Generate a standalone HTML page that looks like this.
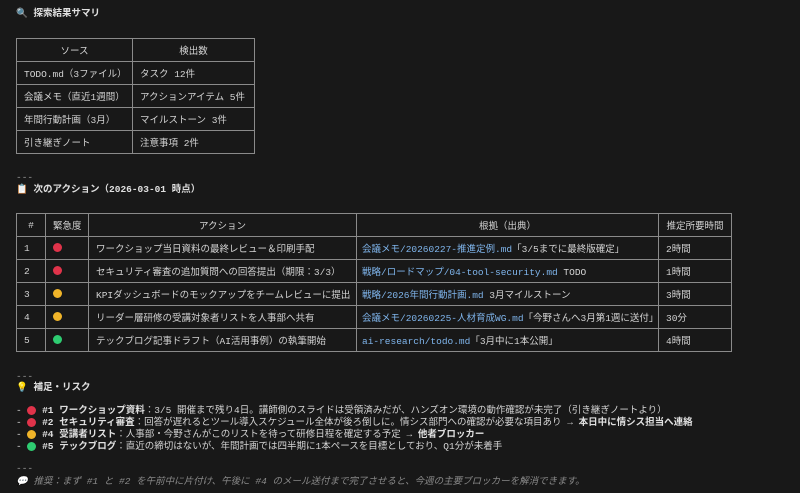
<!DOCTYPE html>
<html><head><meta charset="utf-8"><style>
body{margin:0;width:800px;height:493px;background:#181818;color:#d4d4d4;font-family:"Liberation Mono","Noto Sans CJK JP",monospace;font-size:9.5px;overflow:hidden;position:relative}
.a{position:absolute;white-space:nowrap;line-height:12px}
b{font-weight:bold;color:#e0e0e0}
table{position:absolute;border-collapse:collapse;font-size:9.5px;table-layout:fixed}
td,th{border:1px solid #8a8a8a;padding:0 7px;height:22px;white-space:nowrap;overflow:hidden;font-weight:normal;text-align:left;vertical-align:middle}
th{text-align:center}
.l{color:#7fb5ec}
.dot{display:inline-block;width:9px;height:9px;border-radius:50%;vertical-align:middle}
.r{background:#e0334a}.y{background:#f0b429}.g{background:#2ecc71}
.gr{color:#8a8a8a;font-style:italic}
</style></head><body>
<div class="a" style="left:16px;top:8px"><b>🔍 探索結果サマリ</b></div>
<table style="left:16px;top:38px;width:238px">
<colgroup><col style="width:116px"><col style="width:122px"></colgroup>
<tr><th>ソース</th><th>検出数</th></tr>
<tr><td>TODO.md（3ファイル）</td><td>タスク 12件</td></tr>
<tr><td>会議メモ（直近1週間）</td><td>アクションアイテム 5件</td></tr>
<tr><td>年間行動計画（3月）</td><td>マイルストーン 3件</td></tr>
<tr><td>引き継ぎノート</td><td>注意事項 2件</td></tr>
</table>
<div class="a" style="left:16px;top:172px;color:#999">---</div>
<div class="a" style="left:16px;top:184px"><b>📋 次のアクション（2026-03-01 時点）</b></div>
<table style="left:16px;top:213px;width:715px">
<colgroup><col style="width:29px"><col style="width:43px"><col style="width:268px"><col style="width:302px"><col style="width:73px"></colgroup>
<tr><th>#</th><th>緊急度</th><th>アクション</th><th>根拠（出典）</th><th style="padding:0 4px">推定所要時間</th></tr>
<tr><td>1</td><td><span class="dot r"></span></td><td>ワークショップ当日資料の最終レビュー＆印刷手配</td><td style="padding:0 5px"><span class="l">会議メモ/20260227-推進定例.md</span>「3/5までに最終版確定」</td><td>2時間</td></tr>
<tr><td>2</td><td><span class="dot r"></span></td><td>セキュリティ審査の追加質問への回答提出（期限：3/3）</td><td style="padding:0 5px"><span class="l">戦略/ロードマップ/04-tool-security.md</span> TODO</td><td>1時間</td></tr>
<tr><td>3</td><td><span class="dot y"></span></td><td style="padding:0 2px 0 7px">KPIダッシュボードのモックアップをチームレビューに提出</td><td style="padding:0 5px"><span class="l">戦略/2026年間行動計画.md</span> 3月マイルストーン</td><td>3時間</td></tr>
<tr><td>4</td><td><span class="dot y"></span></td><td>リーダー層研修の受講対象者リストを人事部へ共有</td><td style="padding:0 5px"><span class="l">会議メモ/20260225-人材育成WG.md</span>「今野さんへ3月第1週に送付」</td><td>30分</td></tr>
<tr><td>5</td><td><span class="dot g"></span></td><td>テックブログ記事ドラフト（AI活用事例）の執筆開始</td><td style="padding:0 5px"><span class="l">ai-research/todo.md</span>「3月中に1本公開」</td><td>4時間</td></tr>
</table>
<div class="a" style="left:16px;top:371px;color:#999">---</div>
<div class="a" style="left:16px;top:382px"><b>💡 補足・リスク</b></div>
<div class="a" style="left:16px;top:405px">- <span class="dot r"></span> <b>#1 ワークショップ資料</b>：3/5 開催まで残り4日。講師側のスライドは受領済みだが、ハンズオン環境の動作確認が未完了（引き継ぎノートより）</div>
<div class="a" style="left:16px;top:417px">- <span class="dot r"></span> <b>#2 セキュリティ審査</b>：回答が遅れるとツール導入スケジュール全体が後ろ倒しに。情シス部門への確認が必要な項目あり → <b>本日中に情シス担当へ連絡</b></div>
<div class="a" style="left:16px;top:429px">- <span class="dot y"></span> <b>#4 受講者リスト</b>：人事部・今野さんがこのリストを待って研修日程を確定する予定 → <b>他者ブロッカー</b></div>
<div class="a" style="left:16px;top:441px">- <span class="dot g"></span> <b>#5 テックブログ</b>：直近の締切はないが、年間計画では四半期に1本ペースを目標としており、Q1分が未着手</div>
<div class="a" style="left:16px;top:463px;color:#999">---</div>
<div class="a gr" style="left:16px;top:476px">💬 推奨：まず #1 と #2 を午前中に片付け、午後に #4 のメール送付まで完了させると、今週の主要ブロッカーを解消できます。</div>
</body></html>
